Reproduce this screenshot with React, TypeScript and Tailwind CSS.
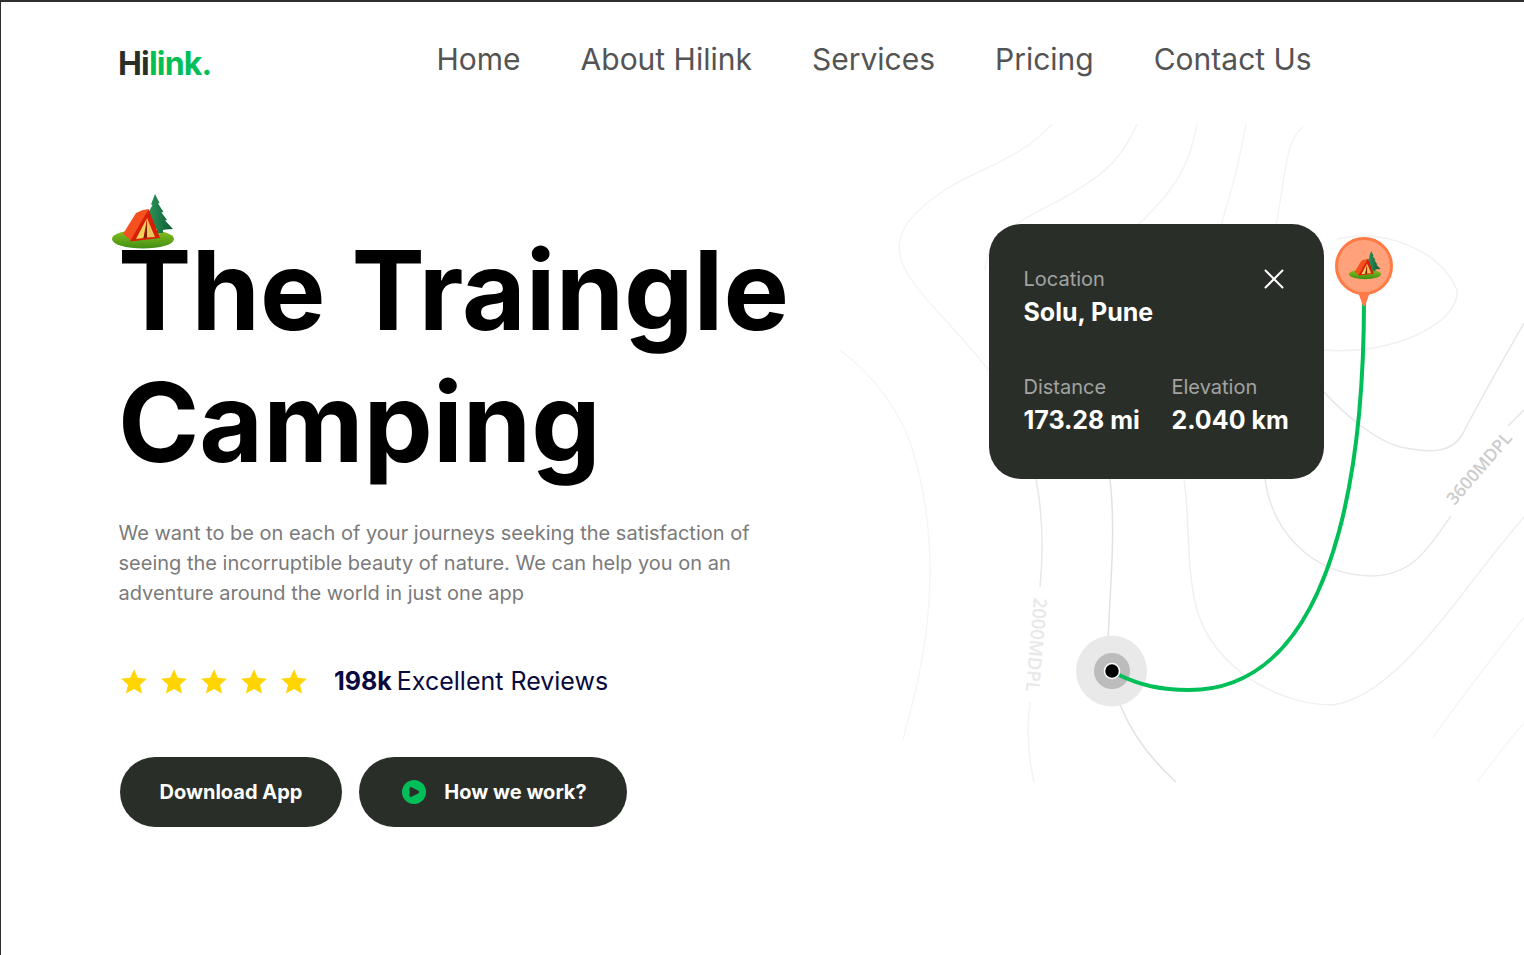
import React from 'react';
import { X } from 'lucide-react';

const navLinks = ['Home', 'About Hilink', 'Services', 'Pricing', 'Contact Us'];

// contour lines of the map, in page coordinates
const contours: { d: string; color: string }[] = [
  { d: 'M1052 124 C1020 160 975 170 945 190 C915 210 895 230 900 255 C905 285 950 320 990 372', color: '#f4f4f4' },
  { d: 'M1137 124 C1120 165 1095 180 1060 200 C1030 215 985 235 985 270', color: '#f3f3f3' },
  { d: 'M1197 124 C1190 165 1175 190 1138 225', color: '#f4f4f4' },
  { d: 'M1246 124 C1240 160 1232 190 1221 225', color: '#f4f4f4' },
  { d: 'M1303 127 C1285 140 1285 180 1276 225', color: '#f4f4f4' },
  { d: 'M1337 239 C1385 228 1440 250 1457 290 C1460 322 1395 356 1324 350', color: '#f1f1f1' },
  { d: 'M1524 323 C1500 365 1480 400 1462 435 C1450 455 1425 452 1400 447 C1375 440 1345 415 1324 392', color: '#e6e6e6' },
  { d: 'M840 350 C880 380 905 420 914 455 C930 510 935 570 925 640 C918 690 910 710 903 740', color: '#f6f6f6' },
  { d: 'M1036 479 C1042 510 1044 545 1040 587', color: '#e8e8e8' },
  { d: 'M1030 702 C1026 730 1028 755 1034 782', color: '#f3f3f3' },
  { d: 'M1110 479 C1116 530 1110 590 1108 640 C1108 700 1135 745 1176 782', color: '#e2e2e2' },
  { d: 'M1184 479 C1190 520 1186 570 1197 610 C1215 670 1280 705 1333 705 C1400 695 1460 590 1524 517', color: '#f0f0f0' },
  { d: 'M1265 479 C1272 530 1310 575 1372 576 C1415 575 1430 545 1451 516', color: '#e8e8e8' },
  { d: 'M1524 617 C1490 660 1460 700 1433 737', color: '#f5f5f5' },
  { d: 'M1524 723 C1505 745 1490 765 1477 782', color: '#f7f7f7' },
  { d: 'M1524 410 L1508 426', color: '#e6e6e6' },
];

const Tent: React.FC<{ className?: string }> = ({ className }) => (
  <svg viewBox="0 0 62 56" className={className}>
    <defs>
      <linearGradient id="ground" x1="0" y1="0" x2="0" y2="1">
        <stop offset="0" stopColor="#8cc21f" />
        <stop offset="1" stopColor="#3f8f14" />
      </linearGradient>
      <linearGradient id="tree" x1="0" y1="0" x2="1" y2="0">
        <stop offset="0" stopColor="#2f9a5c" />
        <stop offset="1" stopColor="#0f5a33" />
      </linearGradient>
    </defs>
    <ellipse cx="31" cy="45" rx="31" ry="9.500" fill="url(#ground)" />
    <path d="M43 0 L47.500 9 L46 9.500 L51.500 18 L49.500 18.500 L55 26 L53 26.500 L61 35 L54 35.500 L51 36 L51 39 L45 39 L45 35 L35 33 L34 24 L37.500 21 L36 19 L40.500 11 L39 10.500 Z" fill="url(#tree)" />
    <path d="M11 40 L24 19 Q30 15.500 36.500 15 L20 47 Z" fill="#f4511e" />
    <path d="M36.500 15 L18 47.500 L48 44 Z" fill="#d81e06" />
    <path d="M35 24 L24 45 L31.500 44 Z" fill="#f2d35a" />
    <path d="M35 24 L43 43 L35 43.500 Z" fill="#e8c558" />
    <path d="M35 30 L31.500 44 L35 43.500 Z" fill="#7a1a08" />
  </svg>
);

const StarIcon = () => (
  <svg viewBox="0 0 26 25" className="w-[26px] h-[25px] shrink-0">
    <path d="M13 0.500 L16.800 8.700 L25.800 9.700 L19.100 15.800 L21 24.600 L13 20.100 L5 24.600 L6.900 15.800 L0.200 9.700 L9.200 8.700 Z" fill="#ffd400" />
  </svg>
);

const PlayIcon = () => (
  <svg viewBox="0 0 24 24" className="w-6 h-6 shrink-0">
    <circle cx="12" cy="12" r="12" fill="#00bf58" />
    <path d="M7.500 8.500 Q7.500 6.800 9.500 7.200 L16.500 10.800 Q18 12 16.500 13.200 L9.500 16.800 Q7.500 17.200 7.500 15.500 Z" fill="#2a2e28" />
  </svg>
);

const App: React.FC = () => {
  return (
    <div className="relative w-full h-[955px] overflow-hidden bg-white border-t-2 border-l border-[#2f2f2f] font-['Inter',sans-serif]">
      {/* Nav */}
      <header className="h-[108px] flex pl-[117px]">
        <div className="w-[318.5px] shrink-0 pt-[42px] text-[32px] leading-[40px] font-bold tracking-[-0.8px] text-[#2a2e28]">
          Hi<span className="text-[#00bf58]">link.</span>
        </div>
        <nav className="flex gap-[60px] pt-[37px]">
          {navLinks.map(link => (
            <a key={link} className="text-[30px] leading-[40px] text-[#545454]">{link}</a>
          ))}
        </nav>
      </header>

      <main className="flex">
        {/* Left column */}
        <section className="w-[722px] ml-[117px] pt-[114px] shrink-0">
          <div className="relative">
            <Tent className="absolute left-[-6px] top-[-30px] w-[62px] h-[56px]" />
            <h1 className="text-[110px] leading-[132px] font-bold text-black">
              The Traingle
              <br />
              Camping
            </h1>
          </div>

          <p className="mt-[30px] pl-[0.5px] text-[20px] leading-[30px] text-[#7a7a7a]">
            We want to be on each of your journeys seeking the satisfaction of
            <br />
            seeing the incorruptible beauty of nature. We can help you on an
            <br />
            adventure around the world in just one app
          </p>

          <div className="mt-[58px] flex items-center h-[30px] pl-[3px]">
            <div className="flex gap-[14px]">
              {[0, 1, 2, 3, 4].map(i => <StarIcon key={i} />)}
            </div>
            <div className="ml-[27px] flex gap-[5px] text-[25px] leading-[30px] text-[#0b0a3f]">
              <span className="font-bold">198k</span>
              <span>Excellent Reviews</span>
            </div>
          </div>

          <div className="mt-[61px] flex gap-[17px] pl-[2px]">
            <button className="w-[222px] h-[70px] rounded-full bg-[#2a2e28] text-white text-[20px] font-bold">
              Download App
            </button>
            <button className="w-[268px] h-[70px] pl-[3px] rounded-full bg-[#2a2e28] text-white text-[20px] font-bold flex items-center justify-center gap-[18px]">
              <PlayIcon />
              How we work?
            </button>
          </div>
        </section>

        {/* Map */}
        <section className="relative flex-1 h-[690px]">
          <svg viewBox="840 110 684 690" className="absolute inset-0 w-[684px] h-[690px]" fill="none">
            {contours.map((c, i) => (
              <path key={i} d={c.d} stroke={c.color} strokeWidth="1.500" />
            ))}
            <text x="0" y="0" transform="translate(1030 643) rotate(95) translate(-46 0)" fontSize="18.500" fontWeight="600" fontFamily="Open Sans, sans-serif" fill="#e8e8e8">2000MDPL</text>
            <text x="0" y="0" transform="translate(1484 472) rotate(-49) translate(-45 0)" fontSize="17.500" fontWeight="600" fontFamily="Open Sans, sans-serif" fill="#cccccc">3600MDPL</text>

            <circle cx="1111.500" cy="671" r="35.500" fill="#e9e9e9" />
            <circle cx="1112" cy="671" r="18" fill="#bcbcbc" />
            <path d="M1364 300 C1364 400 1355 690 1189 690 C1160 690 1140 685 1119 675" stroke="#00bf58" strokeWidth="4" />
            <circle cx="1112" cy="671" r="7.500" fill="#000" stroke="#fff" strokeWidth="1.500" />

            <path d="M1358 292 L1370 292 L1365 306 L1363 306 Z" fill="#ff7a45" />
            <circle cx="1364" cy="266" r="27.500" fill="#ffa17a" stroke="#ff7a45" strokeWidth="3" />
          </svg>
          <Tent className="absolute left-[509px] top-[141px] w-[32px] h-[29px]" />

          {/* Location card */}
          <div className="absolute left-[149px] top-[114px] w-[335px] h-[255px] rounded-[32px] bg-[#2a2e28] pl-[34.5px] pt-[42px]">
            <div className="flex justify-between pr-[33px]">
              <div className="text-[20px] leading-[26px] text-[#a3a3a3]">Location</div>
              <X size={34} strokeWidth={1.4} className="text-white -mt-[4px]" />
            </div>
            <div className="mt-[1px] text-[25px] leading-[30px] font-bold text-white">Solu, Pune</div>
            <div className="mt-[47px] flex">
              <div className="w-[148px]">
                <div className="text-[20px] leading-[26px] text-[#a3a3a3]">Distance</div>
                <div className="mt-[5px] text-[25px] leading-[30px] font-bold text-white">173.28 mi</div>
              </div>
              <div>
                <div className="text-[20px] leading-[26px] text-[#a3a3a3]">Elevation</div>
                <div className="mt-[5px] text-[25px] leading-[30px] font-bold text-white">2.040 km</div>
              </div>
            </div>
          </div>
        </section>
      </main>
    </div>
  );
};

export default App;
